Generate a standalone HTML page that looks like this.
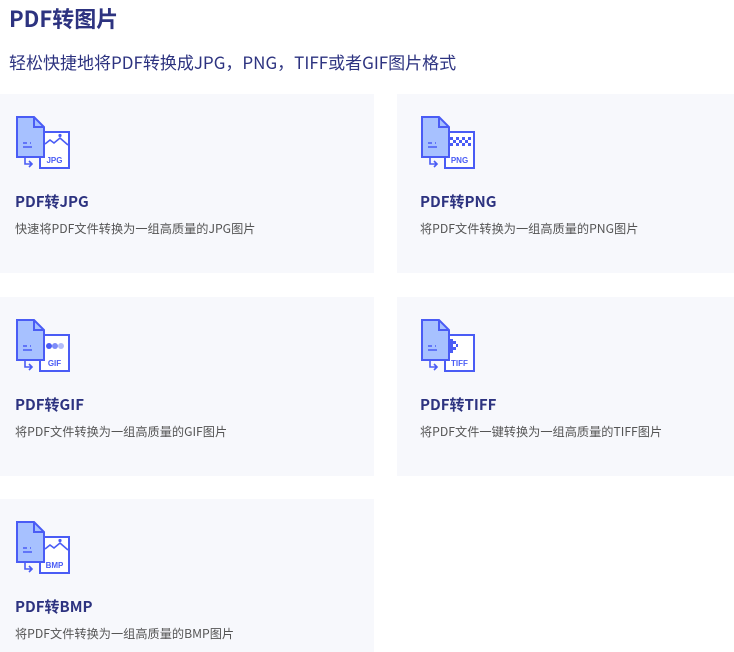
<!DOCTYPE html>
<html><head><meta charset="utf-8"><style>
body{margin:0;width:734px;height:652px;background:#fff;font-family:"Liberation Sans","Noto Sans CJK SC",sans-serif;overflow:hidden;position:relative}
h1{position:absolute;left:9px;top:2px;margin:0;font-size:22px;font-weight:bold;color:#2d3380;font-family:"Noto Sans CJK SC",sans-serif}
.sub{position:absolute;left:9px;top:49px;font-size:17px;color:#2d3380;font-family:"Noto Sans CJK SC",sans-serif}
.card{position:absolute;background:#f7f8fc}
.card svg{position:absolute;left:16px;top:22px}
.t{position:absolute;left:15px;top:97px;font-size:15px;font-weight:bold;color:#2d3380;font-family:"Noto Sans CJK SC",sans-serif}
.d{position:absolute;left:15px;top:125px;font-size:12.2px;color:#555;font-family:"Noto Sans CJK SC",sans-serif}
.r svg{left:24px}.r .t,.r .d{left:23px}
</style></head><body>
<h1>PDF转图片</h1>
<div class="sub">轻松快捷地将PDF转换成JPG，PNG，TIFF或者GIF图片格式</div>

<svg width="0" height="0" style="position:absolute"><defs>
<g id="base">
<rect x="24" y="16" width="29" height="36" fill="#fff" stroke="#4a5cf5" stroke-width="2"/>
<path d="M1,1H18L28,11V41H1Z" fill="#a7c1ff" stroke="#4a5cf5" stroke-width="2"/>
<path d="M18,1V11H28" fill="none" stroke="#4a5cf5" stroke-width="2"/>
<path d="M7,27H11M7,31H16M14,27h1" stroke="#4a5cf5" stroke-width="1.5"/>
<path d="M9,41V48H16M13,45l3,3-3,3" fill="none" stroke="#4a5cf5" stroke-width="1.6"/>
</g>
<g id="mt"><path d="M29,28l5,-4 4,3 6,-5 8,7" fill="none" stroke="#4a5cf5" stroke-width="1.6"/><circle cx="44" cy="19.5" r="1.6" fill="#4a5cf5"/></g>
</defs></svg>

<div class="card" style="left:0;top:94px;width:374px;height:179px">
<svg width="56" height="56"><use href="#base"/><use href="#mt"/><text x="38.5" y="47" font-size="8" font-weight="bold" fill="#4a5cf5" text-anchor="middle" font-family="Liberation Sans">JPG</text></svg>
<div class="t">PDF转JPG</div><div class="d">快速将PDF文件转换为一组高质量的JPG图片</div></div>

<div class="card r" style="left:397px;top:94px;width:337px;height:179px">
<svg width="56" height="56"><use href="#base"/><g fill="#4a5cf5"><rect x="29" y="21" width="3" height="3"/><rect x="35" y="21" width="3" height="3"/><rect x="41" y="21" width="3" height="3"/><rect x="47" y="21" width="3" height="3"/><rect x="32" y="24" width="3" height="3"/><rect x="38" y="24" width="3" height="3"/><rect x="44" y="24" width="3" height="3"/><rect x="29" y="27" width="3" height="3"/><rect x="35" y="27" width="3" height="3"/><rect x="41" y="27" width="3" height="3"/><rect x="47" y="27" width="3" height="3"/></g><text x="38.5" y="47" font-size="8" font-weight="bold" fill="#4a5cf5" text-anchor="middle" font-family="Liberation Sans">PNG</text></svg>
<div class="t">PDF转PNG</div><div class="d">将PDF文件转换为一组高质量的PNG图片</div></div>

<div class="card" style="left:0;top:297px;width:374px;height:179px">
<svg width="56" height="56"><use href="#base"/><circle cx="33" cy="27" r="3" fill="#4a5cf5"/><circle cx="39" cy="27" r="3" fill="#7d8cf8"/><circle cx="45" cy="27" r="3" fill="#b3bdfb"/><text x="38.5" y="47" font-size="8" font-weight="bold" fill="#4a5cf5" text-anchor="middle" font-family="Liberation Sans">GIF</text></svg>
<div class="t">PDF转GIF</div><div class="d">将PDF文件转换为一组高质量的GIF图片</div></div>

<div class="card r" style="left:397px;top:297px;width:337px;height:179px">
<svg width="56" height="56"><use href="#base"/><g fill="#4a5cf5"><rect x="29" y="20" width="3" height="14"/><rect x="32" y="22" width="3" height="3"/><rect x="32" y="28" width="3" height="3"/><rect x="35" y="25" width="2" height="3"/></g><text x="38.5" y="47" font-size="8" font-weight="bold" fill="#4a5cf5" text-anchor="middle" font-family="Liberation Sans">TIFF</text></svg>
<div class="t">PDF转TIFF</div><div class="d">将PDF文件一键转换为一组高质量的TIFF图片</div></div>

<div class="card" style="left:0;top:499px;width:374px;height:153px">
<svg width="56" height="56"><use href="#base"/><use href="#mt"/><text x="38.5" y="47" font-size="8" font-weight="bold" fill="#4a5cf5" text-anchor="middle" font-family="Liberation Sans">BMP</text></svg>
<div class="t">PDF转BMP</div><div class="d">将PDF文件转换为一组高质量的BMP图片</div></div>
</body></html>
